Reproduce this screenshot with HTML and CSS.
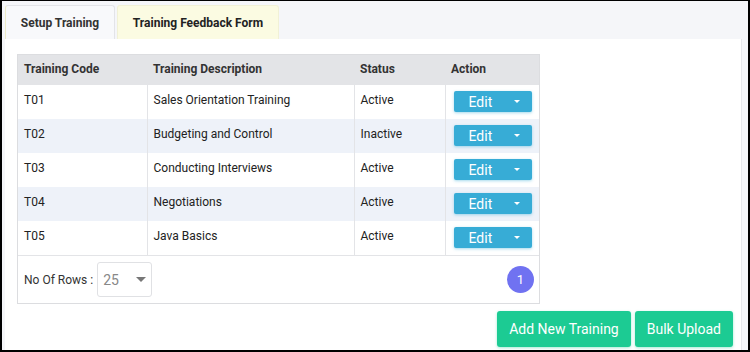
FILE: index.html
```html
<!DOCTYPE html>
<html lang="en">

<head>
    <meta charset="UTF-8">
    <meta name="viewport" content="width=device-width, initial-scale=1.0">
    <title>Setup Training</title>
    <link rel="stylesheet" href="styles.css">
</head>

<body>
    <div class="frame">
        <nav class="tabs">
            <a class="tab tab-active" href="#">Setup Training</a>
            <a class="tab tab-feedback" href="#">Training Feedback Form</a>
        </nav>

        <section class="panel">
            <div class="grid-box">
                <table class="training-table">
                    <tr>
                        <th class="col-code">Training Code</th>
                        <th class="col-desc">Training Description</th>
                        <th class="col-status">Status</th>
                        <th class="col-action">Action</th>
                    </tr>
                    <tr>
                        <td>T01</td>
                        <td>Sales Orientation Training</td>
                        <td>Active</td>
                        <td><button class="edit-btn">Edit <span class="caret"></span></button></td>
                    </tr>
                    <tr class="alt">
                        <td>T02</td>
                        <td>Budgeting and Control</td>
                        <td>Inactive</td>
                        <td><button class="edit-btn">Edit <span class="caret"></span></button></td>
                    </tr>
                    <tr>
                        <td>T03</td>
                        <td>Conducting Interviews</td>
                        <td>Active</td>
                        <td><button class="edit-btn">Edit <span class="caret"></span></button></td>
                    </tr>
                    <tr class="alt">
                        <td>T04</td>
                        <td>Negotiations</td>
                        <td>Active</td>
                        <td><button class="edit-btn">Edit <span class="caret"></span></button></td>
                    </tr>
                    <tr>
                        <td>T05</td>
                        <td>Java Basics</td>
                        <td>Active</td>
                        <td><button class="edit-btn">Edit <span class="caret"></span></button></td>
                    </tr>
                </table>

                <div class="grid-footer">
                    <div class="rows-select">
                        <span>No Of Rows :</span>
                        <div class="select-box">25 <span class="select-caret"></span></div>
                    </div>
                    <span class="page-dot">1</span>
                </div>
            </div>

            <div class="actions">
                <button class="green-btn">Add New Training</button>
                <button class="green-btn">Bulk Upload</button>
            </div>
        </section>
    </div>
</body>

</html>
```

FILE: styles.css
```css
body {
    margin: 0;
    font-family: Roboto, "Liberation Sans", Arial, sans-serif;
    font-size: 12px;
    color: #222;
}

.frame {
    box-sizing: border-box;
    width: 750px;
    height: 352px;
    border: 2px solid #000;
    border-top-width: 1px;
    background-color: #f5f6f9;
    padding: 4px 6px 0 3px;
    display: flex;
    flex-direction: column;
    overflow: hidden;
}

/* Tabs */
.tabs {
    display: flex;
    gap: 2px;
    height: 34px;
}

.tab {
    display: flex;
    align-items: center;
    justify-content: center;
    text-decoration: none;
    color: #222;
    font-weight: bold;
    font-size: 12px;
    border: 1px solid #e3e4e8;
    border-bottom: none;
    border-radius: 3px 3px 0 0;
    box-sizing: border-box;
}

.tab-active {
    width: 110px;
    background-color: #f8f9fb;
    color: #333;
    border-left-color: #ecebc8;
}

.tab-feedback {
    width: 162px;
    background-color: #fbfbe2;
    border-color: #f1f1d6;
}

/* Panel */
.panel {
    flex: 1;
    background-color: #fff;
    border-right: 1px solid #e6e7eb;
    padding: 15px 8px 0 12px;
    display: flex;
    flex-direction: column;
}

.grid-box {
    width: 523px;
    border: 1px solid #dcdde0;
    box-sizing: border-box;
}

.training-table {
    width: 100%;
    border-collapse: collapse;
}

.training-table th {
    background-color: #e3e4e7;
    text-align: left;
    font-weight: bold;
    color: #333;
    height: 28px;
    padding: 0 6px 2px;
}

.training-table td {
    height: 34px;
    padding: 0 6px 4px;
    box-sizing: border-box;
    border-right: 1px solid #e3e4e7;
    vertical-align: middle;
    color: #222;
}

.training-table td:last-child {
    border-right: none;
    padding-bottom: 1px;
}

.training-table tr.alt td {
    background-color: #eef2f9;
}

.col-code {
    width: 117px;
}

.col-desc {
    width: 195px;
}

.col-status {
    width: 79px;
}

.edit-btn {
    display: flex;
    align-items: center;
    justify-content: space-between;
    width: 78px;
    height: 21px;
    margin-left: 2px;
    padding: 0 12px 0 15px;
    border: none;
    border-radius: 2px;
    background-color: #37acd6;
    color: #fff;
    font-family: Roboto, "Liberation Sans", Arial, sans-serif;
    font-size: 14px;
    box-shadow: 0 1px 3px rgba(55, 172, 214, 0.45);
    cursor: pointer;
}

.caret {
    width: 0;
    height: 0;
    border-left: 3px solid transparent;
    border-right: 3px solid transparent;
    border-top: 3px solid #fff;
}

/* Grid footer */
.grid-footer {
    display: flex;
    justify-content: space-between;
    align-items: center;
    height: 47px;
    padding: 0 5px 0 6px;
    border-top: 1px solid #e3e4e7;
}

.rows-select {
    display: flex;
    align-items: center;
    gap: 4px;
    color: #333;
}

.select-box {
    display: flex;
    align-items: center;
    justify-content: space-between;
    box-sizing: border-box;
    width: 55px;
    height: 35px;
    padding: 0 5px 0 5px;
    border: 1px solid #e0e1e4;
    border-radius: 3px;
    color: #888;
    font-size: 14px;
}

.select-caret {
    width: 0;
    height: 0;
    border-left: 5px solid transparent;
    border-right: 5px solid transparent;
    border-top: 5px solid #777;
}

.page-dot {
    display: flex;
    align-items: center;
    justify-content: center;
    width: 27px;
    height: 27px;
    border-radius: 50%;
    background-color: #7072f1;
    color: #fff;
    font-size: 13px;
}

/* Bottom buttons */
.actions {
    display: flex;
    justify-content: flex-end;
    gap: 4px;
    margin-top: 7px;
}

.green-btn {
    height: 36px;
    padding: 0 12px;
    border: none;
    border-radius: 3px;
    background-color: #1ccb93;
    color: #fff;
    font-family: Roboto, "Liberation Sans", Arial, sans-serif;
    font-size: 14px;
    box-shadow: 0 1px 3px rgba(28, 203, 147, 0.4);
    cursor: pointer;
}
```
